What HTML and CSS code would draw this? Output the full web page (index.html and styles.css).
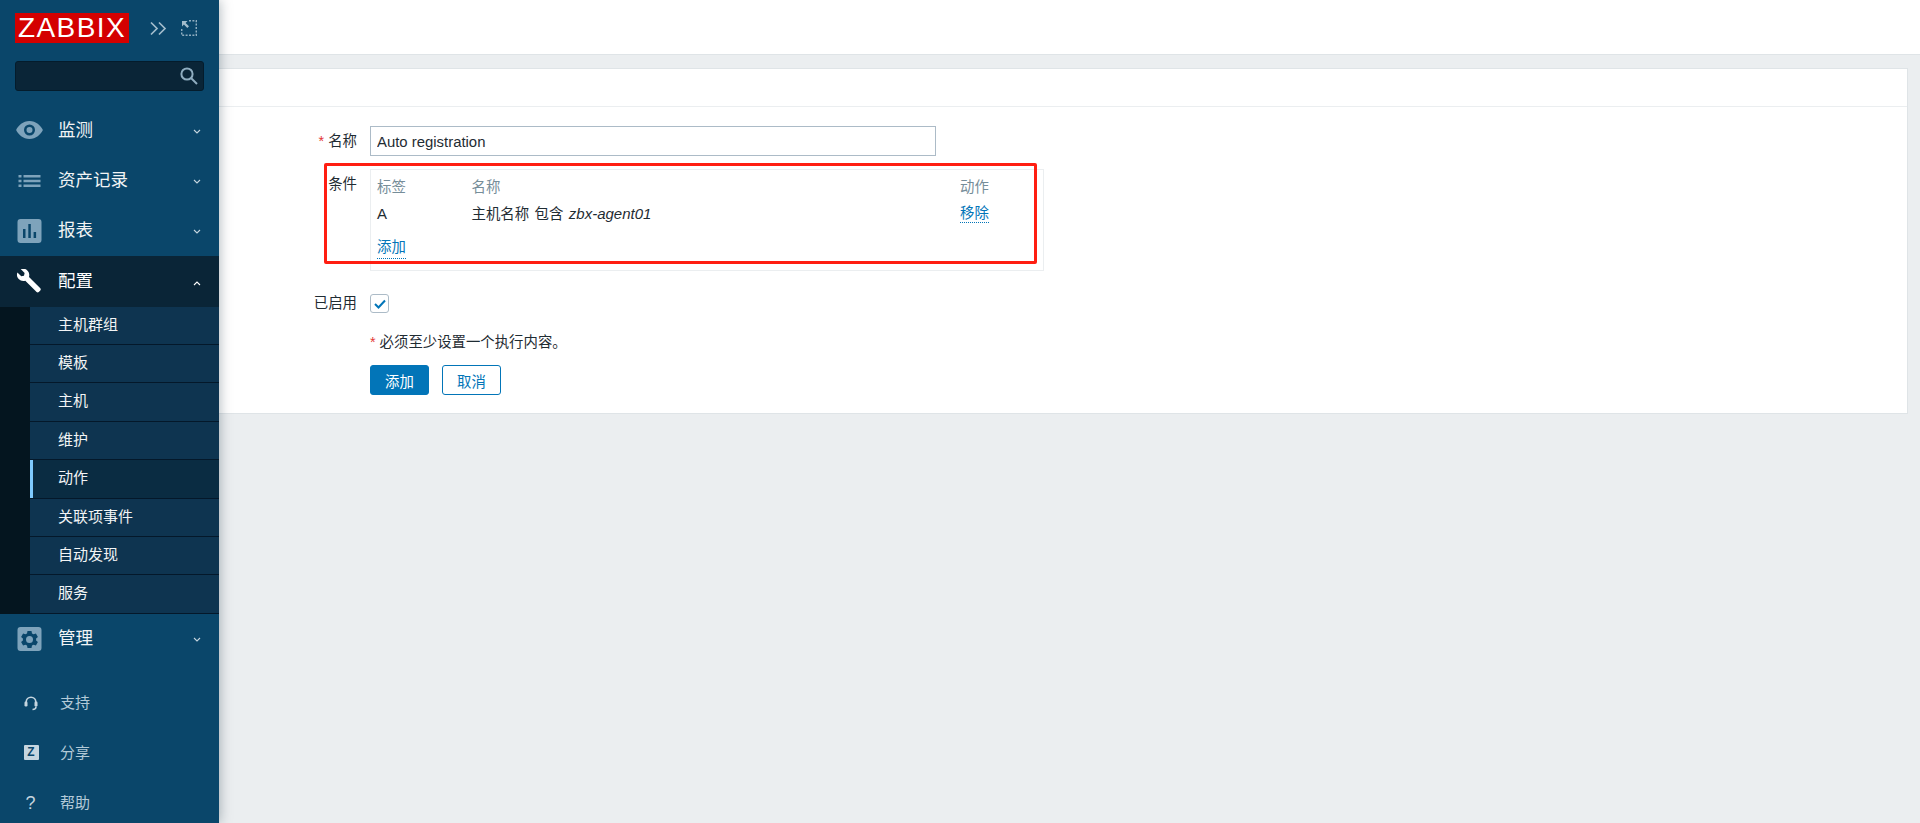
FILE: index.html
```html
<!DOCTYPE html>
<html lang="zh-CN">
<head>
<meta charset="utf-8">
<title>Zabbix</title>
<link rel="stylesheet" href="styles.css">
</head>
<body>
<aside class="sidebar">
  <div class="brand">
    <span class="logo">ZABBIX</span>
    <svg class="collapse" viewBox="0 0 18 14"><path d="M1 1l6 6-6 6M9 1l6 6-6 6"/></svg>
    <svg class="kiosk" viewBox="0 0 16 16"><path class="dots" d="M8 .7h7.300V15.300H.7V8"/><path class="arrow" d="M1 1h5.500L4.600 2.900 8 6.300 6.300 8 2.900 4.600 1 6.500z"/></svg>
  </div>
  <div class="search">
    <svg viewBox="0 0 18 18"><circle cx="7" cy="7" r="5.600"/><path d="M11 11l6 6"/></svg>
  </div>
  <nav class="menu">
    <a class="item">
      <svg class="ico ico-eye" viewBox="0 0 28 20"><path class="fill" fill-rule="evenodd" d="M14 1C7.500 1 2.800 5.500.6 10c2.200 4.500 6.900 9 13.400 9s11.200-4.500 13.400-9C25.200 5.500 20.500 1 14 1zm0 3.500a5.500 5.500 0 1 1 0 11 5.500 5.500 0 0 1 0-11zm0 2.500a3 3 0 1 0 0 6 3 3 0 0 0 0-6z"/></svg>
      <span class="label">监测</span>
      <svg class="chev" viewBox="0 0 8 6"><path d="M1 1l3 3 3-3"/></svg>
    </a>
    <a class="item">
      <svg class="ico ico-list" viewBox="0 0 24 14"><path class="fill" d="M1 1h3v2.400H1zM6 1h17v2.400H6zM1 5.800h3v2.400H1zM6 5.800h17v2.400H6zM1 10.600h3V13H1zM6 10.600h17V13H6z"/></svg>
      <span class="label">资产记录</span>
      <svg class="chev" viewBox="0 0 8 6"><path d="M1 1l3 3 3-3"/></svg>
    </a>
    <a class="item">
      <svg class="ico" viewBox="0 0 24 24"><path class="fill" fill-rule="evenodd" d="M3 0h18a3 3 0 0 1 3 3v18a3 3 0 0 1-3 3H3a3 3 0 0 1-3-3V3a3 3 0 0 1 3-3zm2.500 10v9H8v-9zm5.300-5v14h2.500V5zm5.300 8v6h2.500v-6z"/></svg>
      <span class="label">报表</span>
      <svg class="chev" viewBox="0 0 8 6"><path d="M1 1l3 3 3-3"/></svg>
    </a>
    <a class="item open">
      <svg class="ico" viewBox="0 0 24 24"><path class="fill" d="M22.800 19.300 11.500 8c.7-2.500.1-4.900-1.700-6.600C8 -.4 5.400-.8 3.200.1l3.900 3.900-.6 2.700-2.700.6L-.1 3.400c-.9 2.200-.5 4.800 1.300 6.600 1.700 1.800 4.100 2.400 6.600 1.700l11.300 11.300c.6.600 1.600.6 2.200 0l1.500-1.500c.6-.6.6-1.600 0-2.200z"/></svg>
      <span class="label">配置</span>
      <svg class="chev" viewBox="0 0 8 6"><path d="M1 5l3-3 3 3"/></svg>
    </a>
    <ul class="sub">
      <li>主机群组</li>
      <li>模板</li>
      <li>主机</li>
      <li>维护</li>
      <li class="current">动作</li>
      <li>关联项事件</li>
      <li>自动发现</li>
      <li>服务</li>
    </ul>
    <a class="item">
      <svg class="ico" viewBox="0 0 24 24"><path class="fill" fill-rule="evenodd" d="M3 0h18a3 3 0 0 1 3 3v18a3 3 0 0 1-3 3H3a3 3 0 0 1-3-3V3a3 3 0 0 1 3-3zm7 4-.5 2.400-1.600.9L5.600 6.500 3.600 10l1.800 1.600v1.800L3.600 15l2 3.500 2.300-.8 1.600.9.500 2.400h4l.5-2.400 1.600-.9 2.300.8 2-3.500-1.800-1.600v-1.800L20.400 10l-2-3.500-2.300.8-1.600-.9L14 4zm2 5a3.500 3.500 0 1 1 0 7 3.500 3.500 0 0 1 0-7z"/></svg>
      <span class="label">管理</span>
      <svg class="chev" viewBox="0 0 8 6"><path d="M1 1l3 3 3-3"/></svg>
    </a>
  </nav>
  <div class="links">
    <a class="link">
      <span class="lico"><svg class="headset" viewBox="0 0 14 16"><path d="M2.200 10V7a4.800 4.800 0 0 1 9.600 0v3"/><rect x="0.500" y="6.500" width="3" height="5" rx="1.200"/><rect x="10.500" y="6.500" width="3" height="5" rx="1.200"/><path d="M12 11.500c0 2-1.500 3-3.500 3"/></svg></span>
      <span class="ltext">支持</span>
    </a>
    <a class="link">
      <span class="lico"><span class="zbox">Z</span></span>
      <span class="ltext">分享</span>
    </a>
    <a class="link">
      <span class="lico"><span class="qmark">?</span></span>
      <span class="ltext">帮助</span>
    </a>
  </div>
</aside>

<main class="main">
  <header class="topbar"></header>
  <section class="card">
    <div class="card-head"></div>
    <form class="form">
      <div class="row row-name">
        <label class="lbl"><span class="req">*</span> 名称</label>
        <div class="field"><input class="text" type="text" value="Auto registration"></div>
      </div>
      <div class="row row-cond">
        <label class="lbl">条件</label>
        <div class="field">
          <div class="cond">
            <div class="cond-row cond-head"><span class="c1">标签</span><span class="c2">名称</span><span class="c3">动作</span></div>
            <div class="cond-row cond-body"><span class="c1 latin">A</span><span class="c2">主机名称 包含 <em class="latin">zbx-agent01</em></span><span class="c3"><a class="dot">移除</a></span></div>
            <div class="cond-row cond-add"><a class="dot">添加</a></div>
          </div>
        </div>
      </div>
      <div class="row row-check">
        <label class="lbl">已启用</label>
        <div class="field"><span class="check"><svg viewBox="0 0 12 10"><path d="M1 5l3.500 3.500L11 1.500"/></svg></span></div>
      </div>
      <div class="row row-note">
        <div class="lbl"></div>
        <div class="field"><span class="req">*</span> 必须至少设置一个执行内容。</div>
      </div>
      <div class="row row-btns">
        <div class="lbl"></div>
        <div class="field btns"><button class="btn primary" type="button">添加</button><button class="btn ghost" type="button">取消</button></div>
      </div>
    </form>
    <div class="annot"></div>
  </section>
</main>
</body>
</html>
```

FILE: styles.css
```css
* { box-sizing: border-box; }
html, body { height: 100%; }
body {
  margin: 0;
  display: flex;
  height: 823px;
  overflow: hidden;
  background: #ebeef0;
  color: #1f2c33;
  font: 14.4px/1.2 "Liberation Sans", "Noto Sans CJK SC", sans-serif;
}

/* sidebar */
.sidebar {
  width: 219px;
  flex: none;
  display: flex;
  flex-direction: column;
  background: #0a466a;
  box-shadow: 0 0 12px rgba(4, 28, 44, .35);
  position: relative;
  z-index: 2;
}
.brand {
  display: flex;
  flex: none;
  align-items: center;
  height: 30px;
  margin: 13px 0 0 15px;
}
.logo {
  width: 114px;
  height: 30px;
  background: #d40000;
  color: #fff;
  font: 28px/30px "Liberation Sans", sans-serif;
  letter-spacing: 1.4px;
  text-align: center;
}
.collapse { width: 18px; height: 15px; margin-left: 21px; fill: none; stroke: #a3bdcc; stroke-width: 1.7; }
.kiosk { width: 16px; height: 16px; margin-left: 13px; }
.kiosk .dots { fill: none; stroke: #8fadc0; stroke-width: 1.5; stroke-dasharray: 2 1.4; }
.kiosk .arrow { fill: #a3bdcc; }
.search {
  flex: none;
  height: 30px;
  margin: 18px 15px 14px;
  background: #0a2537;
  border: 1px solid #041c2c;
  border-radius: 3px;
  display: flex;
  align-items: center;
  justify-content: flex-end;
  padding-right: 5px;
}
.search svg { width: 18px; height: 18px; fill: none; stroke: #8fadc0; stroke-width: 2; }

.menu { display: flex; flex-direction: column; flex: none; }
.item {
  height: 50.4px;
  flex: none;
  display: flex;
  align-items: center;
  color: #f2f4f5;
  font-size: 17.5px;
}
.item.open { background: #0a2537; color: #fff; }
.ico { width: 29px; height: 24px; margin-left: 15px; flex: none; }
.ico-eye { height: 20px; }
.ico-list { height: 14px; }
.fill { fill: #7ea3bb; }
.open .fill { fill: #fff; }
.label { margin-left: 14px; flex: 1; }
.chev { width: 8px; height: 6px; margin: 3px 18px 0 0; fill: none; stroke: #c5d5df; stroke-width: 1.1; }
.open .chev { stroke: #fff; }

.sub {
  list-style: none;
  flex: none;
  margin: 0;
  padding: 0 0 0 30px;
  background: #04151f;
}
.sub li {
  height: 38.4px;
  line-height: 36px;
  padding-left: 28px;
  background: #0e3450;
  border-bottom: 1px solid #04182a;
  color: #f2f4f5;
  font-size: 15px;
}
.sub li.current {
  background: #0a2c42;
  box-shadow: inset 3px 0 0 #7fcbff;
}

.links { margin-top: 14px; display: flex; flex-direction: column; flex: none; }
.link {
  height: 49.8px;
  flex: none;
  display: flex;
  align-items: center;
  color: #b3cad8;
  font-size: 15px;
}
.lico { width: 60px; flex: none; display: flex; justify-content: center; }
.headset { width: 14px; height: 16px; margin-left: 2px; fill: #c5d5df; stroke: none; }
.headset path { fill: none; stroke: #c5d5df; stroke-width: 1.6; }
.zbox {
  width: 15px;
  height: 15px;
  margin-left: 2px;
  background: #c5d5df;
  color: #0a466a;
  border-radius: 1px;
  font: bold 12px/15px "Liberation Sans", sans-serif;
  text-align: center;
}
.qmark { margin-left: 1px; font: 18px/18px "Liberation Sans", sans-serif; color: #c5d5df; }

/* main */
.main { flex: 1; min-width: 0; display: flex; flex-direction: column; }
.topbar {
  height: 55px;
  flex: none;
  background: #fff;
  border-bottom: 1px solid #dfe4e7;
}
.card {
  position: relative;
  margin: 13px 12px 0 0;
  height: 346px;
  flex: none;
  background: #fff;
  border: 1px solid #dfe4e7;
  border-left: 0;
}
.card-head { height: 38px; border-bottom: 1px solid #ebeef0; }
.form { padding-top: 19px; display: flex; flex-direction: column; }
.row { display: flex; }
.lbl { width: 138px; flex: none; text-align: right; }
.field { margin-left: 13px; flex: none; }
.req { color: #e33734; }
.latin { font-size: 15px; }

.row-name { align-items: center; height: 30px; }
.row-name .lbl { padding-top: 2px; }
.text {
  width: 566px;
  height: 30px;
  padding: 2px 6px 0;
  border: 1px solid #acbbc7;
  background: #fff;
  color: #1f2c33;
  font: 14.9px "Liberation Sans", sans-serif;
  outline: 0;
}
.row-cond { margin-top: 13px; }
.row-cond .lbl { padding-top: 7px; }
.cond {
  width: 674px;
  height: 102px;
  padding: 0 6px;
  border: 1px solid #ebeef0;
}
.cond-row { display: flex; align-items: center; }
.cond-head { height: 18px; margin-top: 9px; color: #768d99; }
.cond-body { height: 18px; margin-top: 8px; word-spacing: 1.5px; }
.cond-add { height: 18px; margin-top: 17px; }
.c1 { width: 94.5px; flex: none; }
.c2 { width: 488.5px; flex: none; }
.c3 { flex: none; }
.dot {
  color: #0275b8;
  border-bottom: 1px dotted #0275b8;
  padding-bottom: 1px;
}
.row-check { margin-top: 23px; align-items: center; height: 19px; }
.check {
  display: flex;
  align-items: center;
  justify-content: center;
  width: 19px;
  height: 19px;
  border: 1px solid #acbbc7;
  border-radius: 3px;
}
.check svg { width: 12px; height: 10px; fill: none; stroke: #0275b8; stroke-width: 2; }
.row-note { margin-top: 21px; height: 18px; align-items: center; }
.row-btns { margin-top: 13px; }
.btns { display: flex; gap: 13px; }
.btn {
  width: 59px;
  height: 30px;
  padding: 0;
  border-radius: 3px;
  border: 1px solid #0275b8;
  font: 14.4px "Liberation Sans", "Noto Sans CJK SC", sans-serif;
}
.primary { background: #0275b8; color: #fff; }
.ghost { background: #fff; color: #0275b8; }

/* annotation drawn over the screenshot */
.annot {
  position: absolute;
  left: 105px;
  top: 94px;
  width: 713px;
  height: 101px;
  border: 3px solid #ff1e12;
  border-radius: 2px;
}
```
